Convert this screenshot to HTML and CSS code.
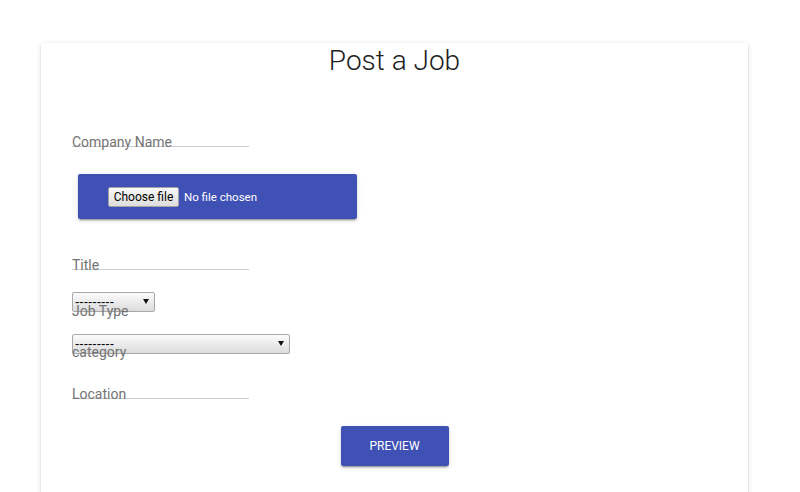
FILE: index.html
```html
<!DOCTYPE html>
<html>
<head>
<meta charset="utf-8">
<title>Post a Job</title>
<link rel="stylesheet" href="styles.css">
</head>
<body>
<div class="card">
  <h1 class="heading">Post a Job</h1>
  <form class="form">
    <div class="field field-company"><label class="label">Company Name</label></div>
    <div class="file-box">
      <span class="file-btn">Choose file</span>
      <span class="file-text">No file chosen</span>
    </div>
    <div class="field field-title"><label class="label">Title</label></div>
    <div class="select select-short"><span class="select-text">---------</span></div>
    <div class="over-label">Job Type</div>
    <div class="select select-long"><span class="select-text">---------</span></div>
    <div class="over-label over-label-cat">category</div>
    <div class="field field-location"><label class="label">Location</label></div>
    <div class="actions"><button type="button" class="btn">PREVIEW</button></div>
  </form>
</div>
</body>
</html>
```
FILE: styles.css
```css
html, body {
  margin: 0;
  padding: 0;
  background: #ffffff;
  overflow: hidden;
}
body {
  font-family: Roboto, "Liberation Sans", sans-serif;
}
.card {
  margin: 43px 0 0 41px;
  width: 707px;
  height: 455px;
  background: #fff;
  border-radius: 2px;
  box-shadow: 0 2px 2px 0 rgba(0,0,0,.14), 0 1px 5px 0 rgba(0,0,0,.12), 0 3px 1px -2px rgba(0,0,0,.2);
}
.heading {
  margin: 0;
  padding-top: 1px;
  font-weight: 300;
  font-size: 28px;
  line-height: 33px;
  text-align: center;
  color: #212121;
}
.form {
  padding: 0 31px;
}
.field {
  width: 177px;
  height: 20px;
  border-bottom: 1px solid #c9ced7;
  display: flex;
  align-items: flex-end;
}
.label, .over-label {
  font-size: 14px;
  line-height: 16px;
  color: #737373;
}
.label {
  margin-bottom: -4px;
}
.field-company { margin-top: 49px; }
.file-box {
  margin: 27px 0 0 6px;
  width: 279px;
  height: 45px;
  box-sizing: border-box;
  padding-left: 30px;
  background: #3f51b5;
  border-radius: 2px;
  display: flex;
  align-items: center;
  gap: 5px;
  box-shadow: 0 2px 2px 0 rgba(0,0,0,.14), 0 1px 5px 0 rgba(0,0,0,.12), 0 3px 1px -2px rgba(0,0,0,.2);
}
.file-btn {
  box-sizing: border-box;
  width: 71px;
  height: 20px;
  border: 1px solid #a3a3a3;
  border-radius: 2px;
  background: linear-gradient(#f8f8f8, #dddddd);
  font-size: 12px;
  line-height: 18px;
  color: #000;
  text-align: center;
  font-family: Roboto, "Liberation Sans", sans-serif;
}
.file-text {
  color: #fff;
  font-size: 11.5px;
}
.field-title { margin-top: 30px; }
.select {
  position: relative;
  box-sizing: border-box;
  height: 20px;
  margin-top: 22px;
  border: 1px solid #a9a9a9;
  border-radius: 2px;
  background: linear-gradient(#fbfbfb, #dcdcdc);
  font-family: "Liberation Sans", Arial, sans-serif;
  font-size: 13px;
  line-height: 18px;
  padding-left: 2px;
  color: #000;
}
.select::after {
  content: "";
  position: absolute;
  right: 5px;
  top: 6px;
  border-left: 3px solid transparent;
  border-right: 3px solid transparent;
  border-top: 5px solid #111;
}
.select-short { width: 83px; }
.select-long { width: 218px; margin-top: 15px; }
.over-label {
  position: relative;
  margin-top: -9px;
}
.over-label-cat { margin-top: -10px; }
.field-location { margin-top: 18px; }
.actions {
  display: flex;
  justify-content: center;
  margin-top: 27px;
}
.btn {
  width: 108px;
  height: 40px;
  border: 0;
  border-radius: 2px;
  background: #3f51b5;
  color: #fff;
  font-family: Roboto, "Liberation Sans", sans-serif;
  font-size: 12px;
  letter-spacing: 0;
  box-shadow: 0 2px 2px 0 rgba(0,0,0,.14), 0 1px 5px 0 rgba(0,0,0,.12), 0 3px 1px -2px rgba(0,0,0,.2);
}
```
